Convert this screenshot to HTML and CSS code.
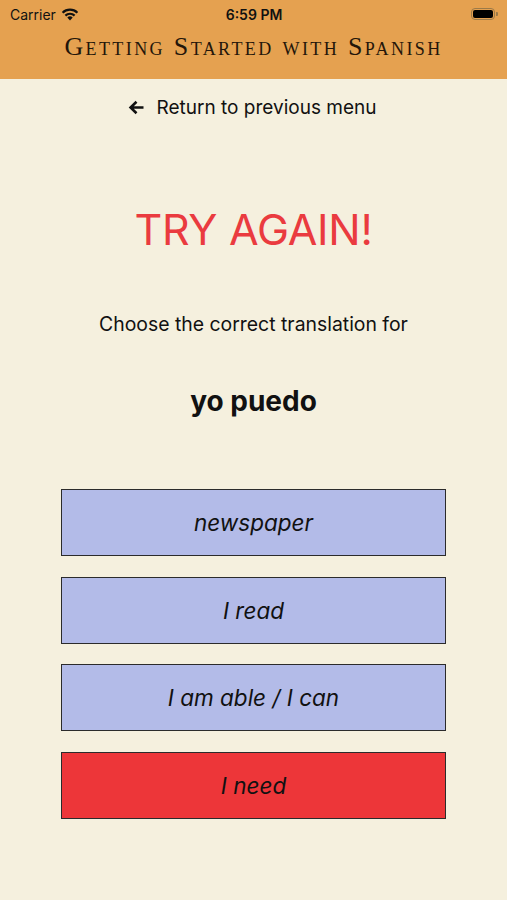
FILE: index.html
```html
<!DOCTYPE html>
<html lang="en">
<head>
    <meta charset="UTF-8">
    <meta name="viewport" content="width=device-width, initial-scale=1.0">
    <title>Getting Started with Spanish</title>
    <link rel="stylesheet" href="styles.css">
</head>
<body>

    <div class="topbar">
        <div class="status">
            <div class="status-left">
                <span>Carrier</span>
                <svg class="wifi" width="18" height="13" viewBox="0 0 18 13">
                    <path d="M9 12.5 L6.3 9.6 A4 4 0 0 1 11.7 9.6 Z" fill="#111"/>
                    <path d="M4.4 7.6 A6.6 6.6 0 0 1 13.6 7.6" stroke="#111" stroke-width="2.2" fill="none"/>
                    <path d="M1.6 4.7 A10.6 10.6 0 0 1 16.4 4.7" stroke="#111" stroke-width="2.2" fill="none"/>
                </svg>
            </div>
            <div class="status-time">6:59 PM</div>
            <div class="status-right">
                <span class="battery"><span class="battery-fill"></span></span>
                <span class="battery-tip"></span>
            </div>
        </div>
        <h1 class="app-title">Getting Started with Spanish</h1>
    </div>

    <div class="content">
        <a class="back" href="#">
            <svg width="17" height="15" viewBox="0 0 17 15">
                <path d="M15.5 7.5 H3 M8.5 1.8 L2.6 7.5 L8.5 13.2" stroke="#111" stroke-width="2.6" fill="none"/>
            </svg>
            <span>Return to previous menu</span>
        </a>

        <h2 class="result">TRY AGAIN!</h2>

        <p class="prompt">Choose the correct translation for</p>

        <p class="word">yo puedo</p>

        <div class="answers">
            <button class="answer">newspaper</button>
            <button class="answer">I read</button>
            <button class="answer">I am able / I can</button>
            <button class="answer wrong">I need</button>
        </div>
    </div>

</body>
</html>
```

FILE: styles.css
```css
* {
    margin: 0;
    padding: 0;
    box-sizing: border-box;
}

body {
    font-family: Inter, Roboto, 'Liberation Sans', sans-serif;
    background-color: #f5f0de;
    color: #111;
    width: 507px;
    height: 900px;
    overflow: hidden;
}

.topbar {
    background-color: #e5a150;
    height: 79px;
}

.status {
    height: 28px;
    display: flex;
    align-items: center;
    justify-content: space-between;
    padding: 0 9px 0 10px;
    font-size: 14px;
    color: #111;
}

.status-left {
    display: flex;
    align-items: center;
    gap: 5px;
    width: 120px;
}

.status-time {
    font-weight: 600;
    font-size: 14px;
}

.status-right {
    width: 120px;
    display: flex;
    justify-content: flex-end;
    align-items: center;
}

.battery {
    width: 24px;
    height: 12px;
    border: 1px solid #9c7a48;
    border-radius: 4px;
    padding: 1px;
    display: flex;
}

.battery-fill {
    flex: 1;
    background-color: #000;
    border-radius: 2px;
}

.battery-tip {
    width: 2px;
    height: 4px;
    background-color: #9c7a48;
    border-radius: 0 1px 1px 0;
    margin-left: 1px;
}

.app-title {
    font-family: 'Liberation Serif', 'DejaVu Serif', serif;
    font-variant: small-caps;
    font-weight: normal;
    font-size: 26px;
    letter-spacing: 2.4px;
    color: #24160a;
    text-align: center;
    line-height: 38px;
}

.content {
    display: flex;
    flex-direction: column;
    align-items: center;
}

.back {
    display: flex;
    align-items: center;
    gap: 12px;
    margin-top: 16px;
    margin-left: -3px;
    font-size: 19px;
    color: #111;
    text-decoration: none;
    height: 24px;
}

.result {
    margin-top: 84px;
    font-size: 43px;
    font-weight: normal;
    color: #ea3b3f;
    letter-spacing: -0.3px;
    line-height: 52px;
}

.prompt {
    margin-top: 57px;
    font-size: 19.4px;
    line-height: 24px;
}

.word {
    margin-top: 48px;
    font-size: 28px;
    font-weight: bold;
    line-height: 34px;
}

.answers {
    margin-top: 71px;
    display: flex;
    flex-direction: column;
    gap: 20.5px;
}

.answer {
    width: 385px;
    height: 67px;
    background-color: #b3bbe8;
    border: 1.5px solid #2b2b2b;
    font-family: inherit;
    font-style: italic;
    font-size: 22.5px;
    color: #111;
    cursor: pointer;
}

.answer.wrong {
    background-color: #ed3639;
}
```
